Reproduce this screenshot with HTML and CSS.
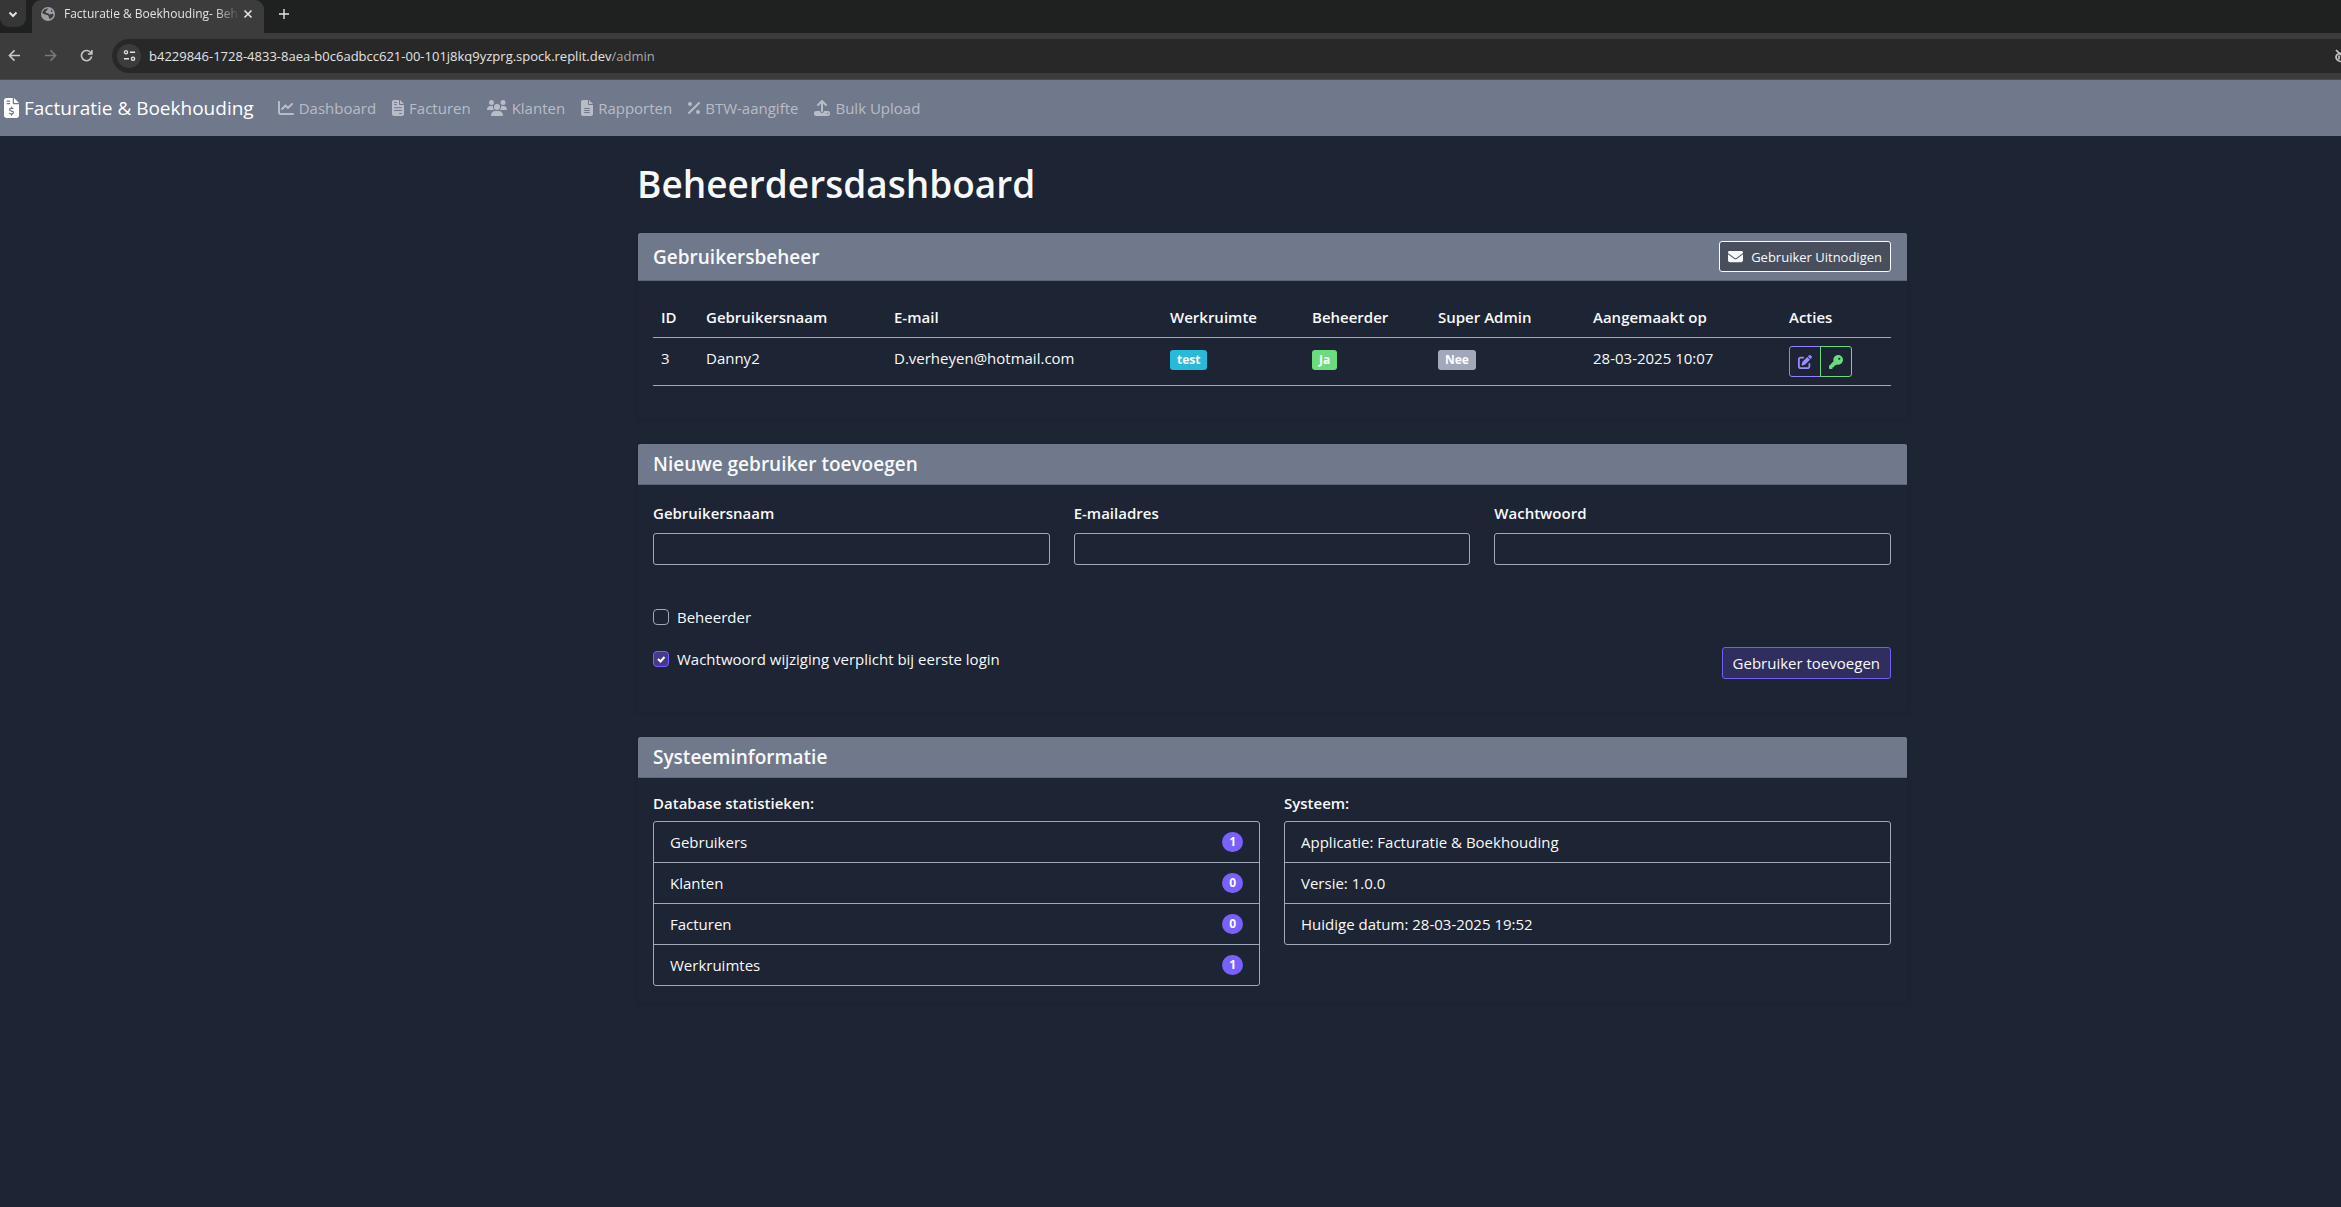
FILE: index.html
```html
<!DOCTYPE html>
<html lang="nl">
<head>
<meta charset="utf-8">
<meta name="viewport" content="width=device-width, initial-scale=1">
<title>Facturatie &amp; Boekhouding - Beheerdersdashboard</title>
<link rel="stylesheet" href="styles.css">
</head>
<body>
<div class="browser">
  <div class="tabstrip">
    <button class="tab-search" aria-label="Tabbladen zoeken"><svg viewBox="0 0 10 10" class="stroke"><path d="M1.500 3.500 5 7l3.500-3.500" stroke-width="2"/></svg></button>
    <div class="tab">
      <svg class="globe" viewBox="0 0 16 16"><circle cx="8" cy="8" r="7" fill="#9aa0a6"/><path d="M8.500 2.500c-1.500.8-1 2-2.500 2.500-.8.300-.5 1.800.5 2 1.800.2 2.500.5 2.500 1.500 1.500 0 2-1 3.500-.8.800.2 1 .8 1 1.300-.5 2-2 3.500-4 4-.2-1-.8-1.500-.8-2.500 0-1.200-1.500-1.500-2.700-1.700C4.500 8.500 4 7.500 2.500 7.500 2 5 5 1.800 8.500 2.500zM11 3.500c.8.500 1.300 1 1.700 2l-1.700.3z" fill="#3c3c3c"/></svg>
      <span class="tab-title">Facturatie &amp; Boekhouding- Beh</span>
      <button class="tab-close" aria-label="Tabblad sluiten"><svg viewBox="0 0 10 10" class="stroke"><path d="M1.500 1.500l7 7M8.500 1.500l-7 7" stroke-width="1.600"/></svg></button>
    </div>
    <button class="tab-new" aria-label="Nieuw tabblad"><svg viewBox="0 0 12 12" class="stroke"><path d="M6 1v10M1 6h10" stroke-width="1.400"/></svg></button>
  </div>
  <div class="toolbar">
    <button class="tool" aria-label="Terug"><svg viewBox="0 0 14 14" class="stroke"><path d="M13 7H2M7 1.500 1.500 7 7 12.500" stroke-width="1.700"/></svg></button>
    <button class="tool dim" aria-label="Vooruit"><svg viewBox="0 0 14 14" class="stroke"><path d="M1 7h11M7 1.500 12.500 7 7 12.500" stroke-width="1.700"/></svg></button>
    <button class="tool" aria-label="Opnieuw laden"><svg viewBox="0 0 14 14" class="stroke"><path d="M12.500 8A5.500 5.500 0 1 1 11 3.200L12.500 5M12.800 1v4.300H8.500" stroke-width="1.700"/></svg></button>
    <div class="address">
      <button class="site-info" aria-label="Sitegegevens"><svg viewBox="0 0 14 14" class="stroke"><circle cx="3.200" cy="3.500" r="1.700" stroke-width="1.500"/><path d="M7.500 3.500H13M1 10.500h5.500" stroke-width="1.600"/><circle cx="10.800" cy="10.500" r="1.700" stroke-width="1.500"/></svg></button>
      <span class="url">b4229846-1728-4833-8aea-b0c6adbcc621-00-101j8kq9yzprg.spock.replit.dev<span class="path">/admin</span></span>
      <svg class="eye" viewBox="0 0 6 14"><path d="M1 1l5 5M6 4.500C3 4 1 6 1 8s2 4.500 5 4.500M4 6.500v4" fill="none" stroke="#c7c7c7" stroke-width="1.700"/></svg>
    </div>
  </div>
</div>

<nav class="navbar">
  <a class="brand" href="#"><svg class="icon" viewBox="0 0 384 512"><path fill-rule="evenodd" d="M64 0C28.700 0 0 28.700 0 64V448c0 35.300 28.700 64 64 64H320c35.300 0 64-28.700 64-64V160H256c-17.700 0-32-14.300-32-32V0H64zM256 0V128H384L256 0zM64 80c0-8.800 7.200-16 16-16h64c8.800 0 16 7.200 16 16s-7.200 16-16 16H80c-8.800 0-16-7.200-16-16zm0 64c0-8.800 7.200-16 16-16h64c8.800 0 16 7.200 16 16s-7.200 16-16 16H80c-8.800 0-16-7.200-16-16zm128 72c8.800 0 16 7.200 16 16v17.300c8.500 1.200 16.700 3.100 24.100 5.100c8.500 2.300 13.600 11 11.300 19.600s-11 13.600-19.600 11.300c-11.100-3-22-5.200-32.100-5.300c-8.400-.1-17.400 1.800-23.600 5.500c-5.700 3.400-8.100 7.300-8.100 12.800c0 3.700 1.300 6.500 7.300 10.100c6.900 4.100 16.600 7.100 29.200 10.900l.5 .1c11.300 3.400 25.300 7.600 36.300 14.600c12.100 7.600 22.400 19.700 22.700 38.200c.3 19.300-9.600 33.300-22.900 41.600c-7.700 4.800-16.400 7.600-25.100 9.100V440c0 8.800-7.200 16-16 16s-16-7.200-16-16V422.200c-11.200-2.100-21.700-5.700-30.900-8.900c-2.100-.7-4.200-1.400-6.200-2.100c-8.400-2.800-12.900-11.900-10.100-20.200s11.900-12.900 20.200-10.100c2.500 .8 4.800 1.600 7.100 2.400c13.600 4.600 24.600 8.400 36.300 8.700c9.100 .3 17.900-1.700 23.700-5.300c5.100-3.200 7.900-7.300 7.800-14c-.1-4.600-1.800-7.800-7.700-11.600c-6.800-4.300-16.500-7.400-29-11.200l-1.600-.5c-11-3.300-24.300-7.300-34.800-13.700c-12-7.200-22.600-18.900-22.700-37.300c-.1-19.400 10.800-32.800 23.800-40.500c7.500-4.400 15.800-7.200 24.100-8.700V232c0-8.800 7.200-16 16-16z"/></svg>Facturatie &amp; Boekhouding</a>
  <a class="nav-link" href="#"><svg class="icon" viewBox="0 0 512 512"><path d="M64 64c0-17.700-14.300-32-32-32S0 46.300 0 64V400c0 44.200 35.800 80 80 80H480c17.700 0 32-14.300 32-32s-14.300-32-32-32H80c-8.800 0-16-7.200-16-16V64zm406.600 86.600c12.500-12.500 12.500-32.800 0-45.300s-32.800-12.500-45.300 0L320 210.700l-57.400-57.400c-12.500-12.500-32.800-12.500-45.300 0l-112 112c-12.500 12.500-12.500 32.800 0 45.300s32.800 12.500 45.300 0L240 221.300l57.400 57.400c12.500 12.500 32.800 12.500 45.300 0l128-128z"/></svg>Dashboard</a>
  <a class="nav-link" href="#"><svg class="icon" viewBox="0 0 384 512"><path fill-rule="evenodd" d="M64 0C28.700 0 0 28.700 0 64V448c0 35.300 28.700 64 64 64H320c35.300 0 64-28.700 64-64V160H256c-17.700 0-32-14.300-32-32V0H64zM256 0V128H384L256 0zM80 64h64c8.800 0 16 7.200 16 16s-7.200 16-16 16H80c-8.800 0-16-7.200-16-16s7.200-16 16-16zm0 64h64c8.800 0 16 7.200 16 16s-7.200 16-16 16H80c-8.800 0-16-7.200-16-16s7.200-16 16-16zM80 232H304c8.800 0 16 7.200 16 16s-7.200 16-16 16H80c-8.800 0-16-7.200-16-16s7.200-16 16-16zm0 88H304c8.800 0 16 7.200 16 16s-7.200 16-16 16H80c-8.800 0-16-7.200-16-16s7.200-16 16-16zM240 416h64c8.800 0 16 7.200 16 16s-7.200 16-16 16H240c-8.800 0-16-7.200-16-16s7.200-16 16-16z"/></svg>Facturen</a>
  <a class="nav-link" href="#"><svg class="icon" viewBox="0 0 640 512"><path d="M144 0a80 80 0 1 1 0 160A80 80 0 1 1 144 0zM512 0a80 80 0 1 1 0 160A80 80 0 1 1 512 0zM0 298.700C0 239.800 47.800 192 106.700 192h42.700c15.900 0 31 3.500 44.600 9.700c-1.300 7.200-1.900 14.700-1.900 22.300c0 38.200 16.800 72.500 43.300 96c-.2 0-.4 0-.7 0H21.300C9.600 320 0 310.400 0 298.700zM405.300 320c-.2 0-.4 0-.7 0c26.600-23.500 43.300-57.800 43.300-96c0-7.600-.7-15-1.900-22.300c13.600-6.300 28.700-9.700 44.600-9.700h42.700C592.200 192 640 239.800 640 298.700c0 11.800-9.600 21.300-21.300 21.300H405.300zM224 224a96 96 0 1 1 192 0 96 96 0 1 1 -192 0zM128 485.300C128 411.700 187.700 352 261.300 352H378.700C452.300 352 512 411.700 512 485.300c0 14.700-11.900 26.700-26.700 26.700H154.700c-14.700 0-26.700-11.900-26.700-26.700z"/></svg>Klanten</a>
  <a class="nav-link" href="#"><svg class="icon" viewBox="0 0 384 512"><path fill-rule="evenodd" d="M64 0C28.700 0 0 28.700 0 64V448c0 35.300 28.700 64 64 64H320c35.300 0 64-28.700 64-64V160H256c-17.700 0-32-14.300-32-32V0H64zM256 0V128H384L256 0zM112 256H272c8.800 0 16 7.200 16 16s-7.200 16-16 16H112c-8.800 0-16-7.200-16-16s7.200-16 16-16zm0 64H272c8.800 0 16 7.200 16 16s-7.200 16-16 16H112c-8.800 0-16-7.200-16-16s7.200-16 16-16zm0 64H272c8.800 0 16 7.200 16 16s-7.200 16-16 16H112c-8.800 0-16-7.200-16-16s7.200-16 16-16z"/></svg>Rapporten</a>
  <a class="nav-link" href="#"><svg class="icon" viewBox="0 0 384 512"><path d="M374.600 118.600c12.500-12.500 12.500-32.800 0-45.300s-32.800-12.500-45.300 0l-320 320c-12.500 12.500-12.500 32.800 0 45.300s32.800 12.500 45.300 0l320-320zM128 128A64 64 0 1 0 0 128a64 64 0 1 0 128 0zM384 384a64 64 0 1 0 -128 0 64 64 0 1 0 128 0z"/></svg>BTW-aangifte</a>
  <a class="nav-link" href="#"><svg class="icon" viewBox="0 0 512 512"><path fill-rule="evenodd" d="M288 109.300V352c0 17.700-14.300 32-32 32s-32-14.300-32-32V109.300l-73.400 73.400c-12.500 12.500-32.800 12.500-45.300 0s-12.500-32.800 0-45.300l128-128c12.500-12.500 32.800-12.500 45.300 0l128 128c12.500 12.500 12.500 32.800 0 45.300s-32.800 12.500-45.300 0L288 109.300zM64 352H192c0 35.300 28.700 64 64 64s64-28.700 64-64H448c35.300 0 64 28.700 64 64v32c0 35.300-28.700 64-64 64H64c-35.300 0-64-28.700-64-64V416c0-35.300 28.700-64 64-64zM432 456a24 24 0 1 0 0-48 24 24 0 1 0 0 48z"/></svg>Bulk Upload</a>
</nav>

<div class="layout">
<main class="content">
  <h1>Beheerdersdashboard</h1>

  <section class="card">
    <header class="card-header">
      <h2>Gebruikersbeheer</h2>
      <button class="btn btn-small btn-invite"><svg class="icon" viewBox="0 0 512 512"><path d="M48 64C21.500 64 0 85.500 0 112c0 15.100 7.100 29.300 19.200 38.400L236.800 313.600c11.400 8.500 27 8.500 38.400 0L492.800 150.400c12.100-9.100 19.200-23.300 19.200-38.400c0-26.500-21.500-48-48-48H48zM0 176V384c0 35.300 28.700 64 64 64H448c35.300 0 64-28.700 64-64V176L294.400 339.200c-22.800 17.100-54 17.100-76.800 0L0 176z"/></svg>Gebruiker Uitnodigen</button>
    </header>
    <div class="card-body">
      <table class="users">
        <colgroup><col class="c-id"><col class="c-name"><col class="c-mail"><col class="c-space"><col class="c-admin"><col class="c-super"><col class="c-date"><col class="c-actions"></colgroup>
        <thead><tr><th>ID</th><th>Gebruikersnaam</th><th>E-mail</th><th>Werkruimte</th><th>Beheerder</th><th>Super Admin</th><th>Aangemaakt op</th><th>Acties</th></tr></thead>
        <tbody><tr>
          <td>3</td><td>Danny2</td><td>D.verheyen@hotmail.com</td>
          <td><span class="badge info">test</span></td>
          <td><span class="badge success">Ja</span></td>
          <td><span class="badge secondary">Nee</span></td>
          <td>28-03-2025 10:07</td>
          <td><div class="btn-group"><button class="btn btn-small edit" aria-label="Bewerken"><svg class="icon" viewBox="0 0 512 512"><path d="M471.600 21.700c-21.900-21.900-57.300-21.900-79.200 0L362.300 51.700l97.900 97.900 30.100-30.100c21.900-21.900 21.900-57.300 0-79.200L471.600 21.700zm-299.200 220c-6.100 6.100-10.800 13.600-13.500 21.900l-29.600 88.800c-2.900 8.600-.6 18.100 5.800 24.600s15.900 8.700 24.600 5.800l88.800-29.600c8.200-2.700 15.700-7.400 21.900-13.500L437.700 172.300 339.700 74.300 172.400 241.700zM96 64C43 64 0 107 0 160V416c0 53 43 96 96 96H352c53 0 96-43 96-96V320c0-17.700-14.300-32-32-32s-32 14.300-32 32v96c0 17.700-14.300 32-32 32H96c-17.700 0-32-14.300-32-32V160c0-17.700 14.300-32 32-32h96c17.700 0 32-14.300 32-32s-14.300-32-32-32H96z"/></svg></button><button class="btn btn-small key" aria-label="Wachtwoord resetten"><svg class="icon" viewBox="0 0 512 512"><path fill-rule="evenodd" d="M336 352c97.200 0 176-78.800 176-176S433.200 0 336 0S160 78.800 160 176c0 18.700 2.900 36.800 8.300 53.700L7 391c-4.500 4.500-7 10.600-7 17v80c0 13.300 10.700 24 24 24h80c13.300 0 24-10.700 24-24V448h40c13.300 0 24-10.700 24-24V384h40c6.400 0 12.500-2.500 17-7l33.300-33.300c16.900 5.400 35 8.300 53.700 8.300zM376 96a40 40 0 1 1 0 80 40 40 0 1 1 0-80z"/></svg></button></div></td>
        </tr></tbody>
      </table>
    </div>
  </section>

  <section class="card">
    <header class="card-header"><h2>Nieuwe gebruiker toevoegen</h2></header>
    <form class="card-body">
      <div class="fields">
        <div class="field"><label for="username">Gebruikersnaam</label><input type="text" id="username"></div>
        <div class="field"><label for="email">E-mailadres</label><input type="email" id="email"></div>
        <div class="field"><label for="password">Wachtwoord</label><input type="password" id="password"></div>
      </div>
      <div class="options">
        <div class="checks">
          <div class="check"><input type="checkbox" id="is-admin"><label for="is-admin">Beheerder</label></div>
          <div class="check"><input type="checkbox" id="force-change" checked><label for="force-change">Wachtwoord wijziging verplicht bij eerste login</label></div>
        </div>
        <button type="submit" class="btn btn-primary">Gebruiker toevoegen</button>
      </div>
    </form>
  </section>

  <section class="card">
    <header class="card-header"><h2>Systeeminformatie</h2></header>
    <div class="card-body columns">
      <div>
        <h3>Database statistieken:</h3>
        <ul class="list">
          <li>Gebruikers<span class="badge count">1</span></li>
          <li>Klanten<span class="badge count">0</span></li>
          <li>Facturen<span class="badge count">0</span></li>
          <li>Werkruimtes<span class="badge count">1</span></li>
        </ul>
      </div>
      <div>
        <h3>Systeem:</h3>
        <ul class="list">
          <li>Applicatie: Facturatie &amp; Boekhouding</li>
          <li>Versie: 1.0.0</li>
          <li>Huidige datum: 28-03-2025 19:52</li>
        </ul>
      </div>
    </div>
  </section>
</main>
</div>
</body>
</html>
```
FILE: styles.css
```css
* { box-sizing: border-box; }

body {
  margin: 0;
  background: #1d2433;
  color: #f8f9fa;
  font: 15px/24px "Segoe UI", "Open Sans", "Noto Sans", sans-serif;
}

button, input { font: inherit; color: inherit; }
h1, h2, h3, ul { margin: 0; padding: 0; }
.icon { height: 1em; fill: currentColor; flex: none; display: block; }
.stroke { fill: none; stroke: currentColor; display: block; }

/* Browser window */
.browser { color: #e3e3e3; overflow: hidden; }
.browser button { border: 0; padding: 0; background: none; display: grid; place-items: center; flex: none; }
.tabstrip { display: flex; height: 33px; background: #1f2120; }
.browser .tab-search { width: 26px; height: 27px; background: #363636; border-radius: 0 0 9px 9px; }
.tab-search svg { width: 10px; }
.tab {
  display: flex;
  align-items: center;
  width: 232px;
  margin-left: 6px;
  padding: 0 8px 6px;
  background: #3c3c3c;
  border-radius: 9px 9px 0 0;
  font-size: 12px;
}
.globe { width: 16px; flex: none; margin-right: 8px; }
.tab-title {
  flex: 1;
  white-space: nowrap;
  mask-image: linear-gradient(to right, #000 86%, transparent);
}
.browser .tab-close { width: 16px; }
.tab-close svg { width: 10px; }
.browser .tab-new { width: 40px; height: 27px; }
.tab-new svg { width: 12px; }

.toolbar {
  display: flex;
  align-items: center;
  height: 47px;
  padding-bottom: 1px;
  background: #3c3c3c;
  border-bottom: 1px solid #4a4a4a;
}
.browser .tool { width: 36px; margin-left: -4px; margin-right: 4px; color: #c7c7c7; }
.tool svg { width: 13px; }
.browser .dim { color: #777; }
.address {
  display: flex;
  align-items: center;
  flex: 1;
  height: 34px;
  margin-left: 4px;
  padding-left: 5px;
  background: #282828;
  border-radius: 17px 0 0 17px;
}
.browser .site-info { width: 24px; height: 24px; background: #3c3c3c; border-radius: 50%; margin-right: 8px; }
.site-info svg { width: 13px; }
.url { font-size: 13px; flex: 1; }
.path { color: #a8a8a8; }
.eye { width: 6px; height: 14px; }

/* Application navigation */
.navbar {
  display: flex;
  align-items: center;
  gap: 16px;
  height: 56px;
  padding-left: 4px;
  background: #70788b;
}
.navbar a { display: flex; align-items: center; gap: 5px; text-decoration: none; color: #b9bcc6; white-space: nowrap; }
.nav-link .icon { height: 16px; }
.navbar .brand { margin-right: 8px; font-size: 19px; color: #fff; }
.brand .icon { height: 20px; }

/* Page content */
.layout { display: grid; grid-template-columns: 637fr 1271fr 433fr; }
.content { grid-column: 2; padding-top: 24px; }
h1 { margin-bottom: 24px; font-size: 37px; line-height: 48px; font-weight: 600; }
h2 { font-size: 19px; line-height: 24px; font-weight: 600; }
h3 { margin-bottom: 8px; font-size: 15px; line-height: 19px; font-weight: 600; }

.card {
  margin-bottom: 24px;
  border: 1px solid #1c2230;
  border-radius: 3px;
  background: #1d2433;
  box-shadow: 0 2px 4px rgba(0, 0, 0, .08);
}
.card-header {
  display: flex;
  align-items: center;
  justify-content: space-between;
  padding: 8px 16px 8px 15px;
  background: #70788b;
  border-bottom: 1px solid #5d6577;
  border-radius: 2px 2px 0 0;
}
.card-body { padding: 16px 16px 16px 15px; }

.btn {
  display: inline-flex;
  align-items: center;
  justify-content: center;
  padding: 3px 10px;
  border: 1px solid;
  border-radius: 3px;
  background: none;
  white-space: nowrap;
}
.btn-small { height: 31px; padding: 0 8px; font-size: 13px; }
.btn-invite { gap: 8px; background: #484e5b; border-color: #f8f9fa; }
.btn-invite .icon { height: 15px; }
.btn-primary { height: 32px; background: #2f2e5e; border-color: #7460f0; }
.btn-group { display: flex; }
.btn-group .icon { height: 14px; }
.btn-group .edit { width: 32px; color: #9d8cff; border-radius: 3px 0 0 3px; border-color: #9580ff; }
.btn-group .key { width: 32px; margin-left: -1px; color: #6bdb7f; border-radius: 0 3px 3px 0; }

.users { width: 100%; margin-bottom: 16px; table-layout: fixed; border-collapse: separate; border-spacing: 0; text-align: left; }
.users th, .users td { padding: 8px; border-bottom: 1px solid #a0a8ba; vertical-align: top; }
.users th { font-weight: 600; }
.c-id { width: 45px; }
.c-name { width: 188px; }
.c-mail { width: 276px; }
.c-space { width: 142px; }
.c-admin { width: 126px; }
.c-super { width: 155px; }
.c-date { width: 196px; }
.c-actions { width: 110px; }

.badge {
  display: inline-block;
  padding: 0 7px;
  border-radius: 3px;
  font-size: 12px;
  line-height: 20px;
  font-weight: 700;
  color: #fff;
}
.info { background: #29b9d9; }
.success { background: #6bdb7f; }
.secondary { background: #a0a8ba; }
.count { border-radius: 10px; background: #7960ff; }

.fields { display: grid; grid-template-columns: repeat(3, 1fr); gap: 24px; }
.field label { display: block; margin-bottom: 8px; font-weight: 600; }
.field input {
  display: block;
  width: 100%;
  height: 32px;
  padding: 3px 10px;
  border: 1px solid #a0a8ba;
  border-radius: 3px;
  background: transparent;
}
.options { display: flex; justify-content: space-between; align-items: flex-end; margin: 40px 0 16px; }
.checks { display: grid; gap: 18px; padding-bottom: 8px; }
.check { display: flex; align-items: center; gap: 8px; }
.check input {
  appearance: none;
  width: 16px;
  height: 16px;
  margin: 0;
  border: 1px solid #a0a8ba;
  border-radius: 4px;
}
.check input:checked {
  border-color: #7960ff;
  background: #46398c url("data:image/svg+xml,%3Csvg xmlns='http://www.w3.org/2000/svg' viewBox='0 0 14 14'%3E%3Cpath d='M4 7l2.500 2.500L10.500 5' fill='none' stroke='white' stroke-width='2'/%3E%3C/svg%3E") center / 14px;
}

.columns { display: grid; grid-template-columns: 1fr 1fr; gap: 24px; }
.list { list-style: none; border: 1px solid #a0a8ba; border-radius: 3px; }
.list li { display: flex; justify-content: space-between; align-items: center; padding: 8px 16px; }
.list li + li { border-top: 1px solid #a0a8ba; }
```
